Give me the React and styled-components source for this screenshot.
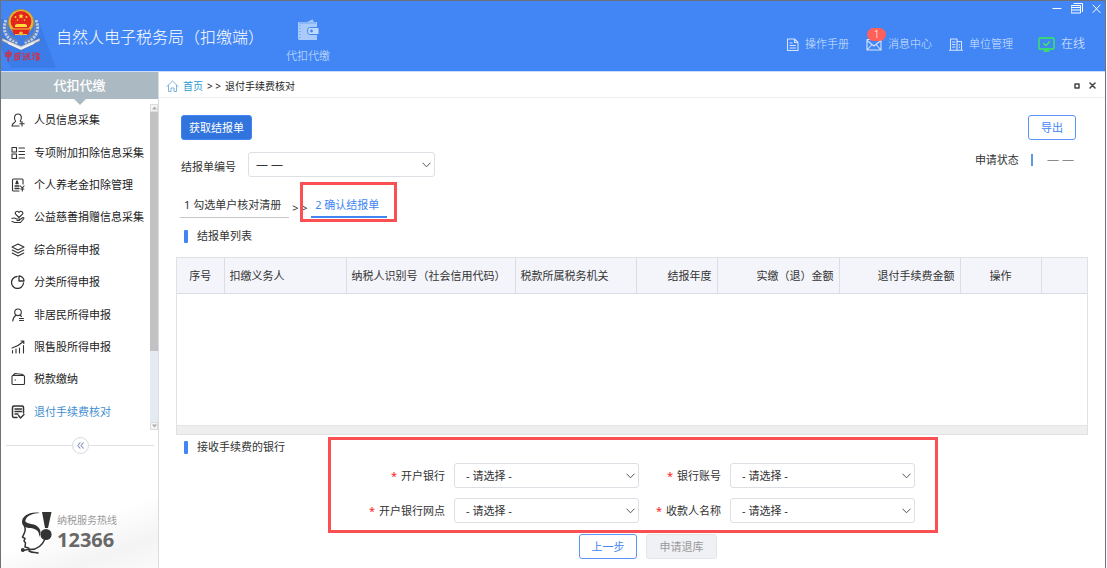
import React from "react";
import styled, { createGlobalStyle, css } from "styled-components";

const Global = createGlobalStyle`
  *, *::before, *::after { box-sizing: border-box; }
  body {
    margin: 0;
    background: #fff;
    color: #333;
    font: 11px/16px "Noto Sans", "Noto Sans CJK SC", sans-serif;
  }
  button, select { font: inherit; }
  h2, h3, p, ul { margin: 0; padding: 0; font-weight: 400; font-size: inherit; }
  a { color: inherit; text-decoration: none; }
`;

const Frame = styled.div`
  display: flex;
  flex-direction: column;
  min-height: 100vh;
  margin-right: 1px;
  border: 1px solid #6d7178;
  border-bottom: 0;
`;

/* ---------- top bar ---------- */

const TopBar = styled.header`
  position: relative;
  display: flex;
  align-items: flex-start;
  height: 71px;
  background: #4286f5;
  border-bottom: 1px solid #c9dcfb;
`;

const Logo = styled.svg`
  flex: none;
  width: 55px;
  height: 70px;
`;

const AppTitle = styled.h1`
  margin: 24px 0 0;
  color: #fff;
  font-size: 16px;
  line-height: 24px;
  font-weight: 300;
`;

const ModuleTab = styled.a`
  display: flex;
  flex-direction: column;
  align-items: center;
  gap: 7px;
  margin: 18px 0 0 22px;
  color: #d5e4fd;
  font-weight: 300;
`;

const TopLinks = styled.nav`
  display: flex;
  gap: 17px;
  margin: 35px 20px 0 auto;
`;

const TopLink = styled.a`
  position: relative;
  display: flex;
  align-items: center;
  gap: 6px;
  color: #d5e4fd;
  font-weight: 300;
  ${(p) =>
    p.$status &&
    css`
      margin-left: 8px;
      color: #e9f1ff;
      font-size: 12px;
    `}
`;

const Badge = styled.span`
  position: absolute;
  left: 1px;
  top: -8px;
  width: 19px;
  height: 13px;
  border-radius: 7px;
  background: #ff6059;
  color: #fff;
  font-size: 10px;
  line-height: 13px;
  text-align: center;
`;

const WindowControls = styled.div`
  position: absolute;
  top: 2px;
  right: 4px;
  display: flex;
  gap: 9px;
`;

const IconButton = styled.button`
  display: flex;
  padding: 0;
  border: 0;
  background: none;
  color: ${(p) => p.$color || "#fff"};
  cursor: pointer;
`;

/* ---------- side bar ---------- */

const Body = styled.div`
  display: flex;
  flex: 1;
`;

const SideBar = styled.aside`
  display: flex;
  flex-direction: column;
  flex: none;
  width: 158px;
  border-right: 1px solid #d9dce0;
`;

const SideTitle = styled.h2`
  position: relative;
  height: 27px;
  background: #abb9c2;
  color: #fff;
  font-size: 13px;
  line-height: 27px;
  font-weight: 500;
  text-align: center;
  &::after {
    content: "";
    position: absolute;
    top: 27px;
    left: 50%;
    margin-left: -6px;
    border: 6px solid transparent;
    border-top-color: #abb9c2;
    border-bottom: 0;
  }
`;

const MenuArea = styled.div`
  display: flex;
  height: 326px;
  margin-top: 5px;
`;

const Menu = styled.ul`
  display: flex;
  flex-direction: column;
  flex: 1;
  padding-bottom: 2px;
  list-style: none;
`;

const MenuItem = styled.li`
  display: flex;
  flex: 1;
`;

const MenuLink = styled.a`
  display: flex;
  align-items: center;
  gap: 8px;
  padding-left: 10px;
  white-space: nowrap;
  color: ${(p) => (p.$active ? "#3f8fd0" : "#1c1c1c")};
  svg { flex: none; color: #333; }
`;

const Scroller = styled.div`
  display: flex;
  flex-direction: column;
  flex: none;
  width: 8px;
  background: #e4ebf2;
`;

const ScrollArrow = styled.span`
  display: flex;
  align-items: center;
  justify-content: center;
  height: 8px;
  background: #f4f4f4;
  border: 1px solid #dcdcdc;
`;

const ScrollThumb = styled.span`
  height: 239px;
  margin-bottom: auto;
  background: #c2c2c2;
`;

const Divider = styled.div`
  display: flex;
  align-items: center;
  margin: 7px 4px 0 5px;
  &::before, &::after {
    content: "";
    flex: 1;
    height: 1px;
    background: #dfe1e4;
  }
`;

const Collapse = styled.button`
  display: flex;
  align-items: center;
  justify-content: center;
  width: 17px;
  height: 17px;
  padding: 0;
  border: 1px solid #d5d8e0;
  border-radius: 50%;
  background: #fff;
  color: #8c99bd;
`;

const Hotline = styled.div`
  display: flex;
  align-items: center;
  gap: 4px;
  margin-top: auto;
  padding: 20px 0 14px 19px;
  background: linear-gradient(160deg, #fff 45%, #f4f4f5 75%, #fafafa 100%);
`;

const HotlineLabel = styled.p`
  color: #9a9a9a;
  font-size: 10px;
  line-height: 14px;
`;

const HotlineNumber = styled.p`
  color: #686868;
  font: 700 20px/26px "Noto Sans", sans-serif;
`;

/* ---------- main area ---------- */

const Main = styled.main`
  flex: 1;
  min-width: 0;
`;

const CrumbBar = styled.div`
  display: flex;
  align-items: center;
  gap: 4px;
  height: 26px;
  padding: 2px 9px 0 7px;
  border-bottom: 1px solid #eceef0;
  color: #222;
  font-size: 10px;
`;

const CrumbLink = styled.a`
  display: flex;
  align-items: center;
  gap: 4px;
  color: #2e9ad0;
`;

const PaneControls = styled.div`
  display: flex;
  align-items: center;
  gap: 9px;
  margin-left: auto;
`;

const Content = styled.div`
  padding: 17px 17px 10px;
`;

const Row = styled.div`
  display: flex;
  justify-content: space-between;
  align-items: flex-start;
  padding: 0 12px 0 5px;
  & + & { margin-top: 12px; }
`;

const Button = styled.button`
  height: 25px;
  padding: 0;
  width: ${(p) => (p.$wide ? 71 : 58)}px;
  border: 1px solid #5b95f6;
  border-radius: 3px;
  background: #fff;
  color: #4286f5;
  ${(p) =>
    p.$primary &&
    css`
      border-color: #4286f5;
      background: #3274dd;
      color: #fff;
    `}
  ${(p) => p.$compact && css`width: 48px;`}
  &:disabled {
    border-color: #e3e5ea;
    background: #f0f1f5;
    color: #9a9a9a;
  }
`;

const Field = styled.div`
  display: flex;
  gap: 12px;
`;

const FieldLabel = styled.label`
  padding-top: 7px;
`;

const SelectBox = styled.div`
  position: relative;
  width: ${(p) => p.$width}px;
  svg {
    position: absolute;
    right: 4px;
    top: 10px;
    pointer-events: none;
  }
`;

const NativeSelect = styled.select`
  display: block;
  appearance: none;
  width: 100%;
  height: 25px;
  padding: 0 18px 0 ${(p) => (p.$tight ? 7 : 11)}px;
  border: 1px solid #dcdfe4;
  border-radius: 3px;
  background: #fff;
  color: #333;
  ${(p) => p.$tight && css`font-size: 12px;`}
`;

const Status = styled.div`
  display: flex;
  align-items: center;
  gap: 12px;
  color: #333;
`;

const StatusBar = styled.span`
  width: 2px;
  height: 12px;
  background: #5a9ade;
`;

const StatusValue = styled.span`
  padding: 0 2px;
  color: #8a8a8a;
  font-size: 12px;
`;

const Steps = styled.div`
  display: flex;
  align-items: flex-start;
  margin: 17px 0 0 4px;
`;

const Step = styled.a`
  position: relative;
  height: 24px;
  padding: 2px 8px 0 4px;
  line-height: 18px;
  border-bottom: ${(p) => (p.$active ? "2px solid #4286f5" : "1px solid #c4c6ca")};
  color: ${(p) => (p.$active ? "#4286f5" : "#333")};
`;

const StepArrow = styled.span`
  width: 22px;
  padding: 6px 0 0 3px;
  white-space: nowrap;
`;

const Highlight = styled.span`
  position: absolute;
  inset: ${(p) => p.$inset};
  border: 3px solid #fb5053;
  pointer-events: none;
`;

const SectionTitle = styled.h3`
  display: flex;
  align-items: center;
  gap: 9px;
  height: 14px;
  margin: ${(p) => p.$top}px 0 0 8px;
  &::before {
    content: "";
    width: 4px;
    height: 13px;
    border-radius: 1px;
    background: #4286f5;
  }
`;

const TableBox = styled.div`
  display: flex;
  flex-direction: column;
  height: 178px;
  margin-top: 14px;
  border: 1px solid #dfe1e5;
`;

const Table = styled.table`
  width: 100%;
  table-layout: fixed;
  border-collapse: collapse;
`;

const HeadCell = styled.th`
  width: ${(p) => (p.$width ? p.$width + "px" : "auto")};
  height: 35px;
  padding: 2px 5px 0 5px;
  border: solid #dcdee3;
  border-width: 0 1px 1px 0;
  background: #f4f5fa;
  color: #333;
  font-weight: 400;
  text-align: ${(p) => p.$align || "left"};
  white-space: nowrap;
  &:last-child { border-right: 0; }
`;

const ScrollStrip = styled.div`
  height: 9px;
  margin-top: auto;
  border-top: 1px solid #e4e4e4;
  background: #eee;
`;

const BankForm = styled.form`
  position: relative;
  display: grid;
  grid-template-columns: 96px 185px 73px 185px;
  gap: 10px 9px;
  width: max-content;
  margin: 9px auto 0;
`;

const FormLabel = styled.label`
  padding-top: 5px;
  text-align: right;
  white-space: nowrap;
  &::before {
    content: "*";
    margin-right: 4px;
    color: #f22;
  }
`;

const Actions = styled.div`
  display: flex;
  justify-content: center;
  gap: 9px;
  margin-top: 11px;
  padding-left: 32px;
`;

/* ---------- drawings ---------- */

const Icon = ({ w = 14, h = w, box, children, sw = 1.1 }) => (
  <svg
    width={w}
    height={h}
    viewBox={box || `0 0 ${w} ${h}`}
    fill="none"
    stroke="currentColor"
    strokeWidth={sw}
    strokeLinecap="round"
    strokeLinejoin="round"
    aria-hidden="true"
  >
    {children}
  </svg>
);

const Emblem = () => (
  <Logo viewBox="0 0 55 70" aria-hidden="true">
    <path d="M0 18 H37 L55 67 H10 L0 48Z" fill="#3b7ce8" />
    <g fill="none" stroke="#c5cbd6" strokeWidth="3" strokeDasharray="2.4 1">
      <path d="M5 19 C1 28 4 38 17 43" />
      <path d="M35 19 C39 28 36 38 23 43" />
    </g>
    <g fill="none" stroke="#78849a" strokeWidth="1.2">
      <path d="M7 21 C4 29 8 37 17 40" />
      <path d="M33 21 C36 29 32 37 23 40" />
    </g>
    <path d="M1 37 L20 45 L39 37 L39 40 L20 49 L1 40Z" fill="#d8dde5" stroke="#66738c" strokeWidth=".7" />
    <path d="M7 42 L20 48 L33 42" fill="none" stroke="#f3f5f8" strokeWidth="1.4" />
    <circle cx="20" cy="21" r="12.6" fill="#e5b73a" stroke="#b98a1e" strokeWidth=".6" />
    <circle cx="20" cy="20.5" r="10.4" fill="#e3261c" />
    <path d="M20 12.5 l.8 1.700 1.800 .2 -1.300 1.200 .4 1.800 -1.700 -.9 -1.700 .9 .4 -1.800 -1.300 -1.200 1.800 -.2z" fill="#ffdc3c" />
    <g fill="#ffdc3c">
      <circle cx="14.5" cy="16" r=".9" />
      <circle cx="25.5" cy="16" r=".9" />
      <circle cx="16.5" cy="19" r=".8" />
      <circle cx="23.5" cy="19" r=".8" />
      <path d="M14 26 v-2 l2-1 h8 l2 1 v2z" />
    </g>
    <path d="M11 28 h18 l-2 6 h-14z" fill="#e3261c" />
    <path d="M12 28 h16 M14 33.5 h4 M22 33.5 h4" stroke="#f1c340" strokeWidth="1.2" />
    <circle cx="20" cy="32.5" r="2" fill="#efc03a" />
    <g fill="none" stroke="#d92c3c" strokeWidth="1.1" strokeLinecap="round">
      <path d="M5 52 h5 l-.6 3 h-4.600z M7.500 49.500 L7.200 60" strokeWidth="1.400" />
      <path d="M14 53 l5-1 -.6 6 -4.600 1z M15 55 h3 M16.500 54 v4" />
      <path d="M22 52 l1 1 M22 55 l1.500 0 -1 4 M25.500 52.500 l1 1.500 M28.500 52 l-1 2 M25 55 h3 M26 56 l-1.500 3 M27.500 56 l.5 2.500 1.500 0" />
      <path d="M32 52 l1 1 M31.500 54.500 h1.500 l-1 4 M36 51.500 l-1.500 2 M35 53 l3.500 0 -3 3 M36 55.500 l2.500 1 M35 57.500 h3 l-1 2 M37 57 l-2 2.500" />
    </g>
  </Logo>
);

const WalletIcon = () => (
  <svg width="22" height="22" viewBox="0 0 22 22" aria-hidden="true">
    <path d="M1 3 H10 L15.500 .5 L17 3 H20 V21 H2.500 Q1 21 1 19.500Z" fill="#a9cbfa" />
    <path d="M2 4 H19" stroke="#6da3f7" strokeWidth="1" />
    <path d="M3 6 V19" stroke="#5a96f4" strokeWidth="1" strokeDasharray="1 2" />
    <path d="M12.500 8.500 H22 V15.500 H12.500 Q10.500 15 10.500 12 Q10.500 9 12.500 8.500Z" fill="#bfd9fd" stroke="#4286f5" strokeWidth="1" />
    <circle cx="14.500" cy="12" r="1.400" fill="#4286f5" />
  </svg>
);

const HotlineFace = () => (
  <svg width="33" height="44" viewBox="0 0 33 44" aria-hidden="true">
    <path d="M20 2 C10 0 2 5 2 11 C2 15 6 17 11 17 C17 18 20 21 19 26 C23 20 19 14 11 13 C7 12 4 11 6 8 C8 4 13 2.500 20 2Z" fill="#333" />
    <path d="M22 1 H31.500 L28 17 H25Z" fill="#333" />
    <circle cx="26" cy="23.500" r="5.600" fill="#333" />
    <g fill="none" stroke="#333" strokeWidth="1.500" strokeLinecap="round">
      <path d="M4.500 15 C6 19 5 21 2.500 26 L5 27.500 L4 30 L5.500 32 L5 36 L8.500 37" />
      <path d="M25 28 C22 35 17 39 9 38.500 M3 39.500 L10 38 M9 40 C13 42.500 15 41 18 42" />
    </g>
    <circle cx="2.800" cy="39" r="1.900" fill="#333" />
  </svg>
);

const menuItems = [
  {
    label: "人员信息采集",
    icon: (
      <>
        <path d="M4.500 8 C2.800 6 3 1 7 1 C11 1 11 6 9.200 8 M4.500 8 C5 9.500 1 9.500 1 13 H8 M9.200 8 L10 9" />
        <path d="M11 8.500 V13 M8.800 10.800 H13.200" />
      </>
    ),
  },
  {
    label: "专项附加扣除信息采集",
    icon: (
      <>
        <rect x="1" y="1.500" width="4.500" height="4.500" />
        <rect x="1" y="8" width="4.500" height="4.500" />
        <path d="M8 2 H13.500 M8 5.500 H13.500 M8 8.500 H13.500 M8 12 H13.500" />
      </>
    ),
  },
  {
    label: "个人养老金扣除管理",
    icon: (
      <>
        <path d="M8 13 H2.500 Q1.500 13 1.500 12 V2 Q1.500 1 2.500 1 H11 Q12 1 12 2 V6" />
        <path d="M5 5.500 L6 3 L7 5.500 Z M4 8 H8 M4 10.500 H8" strokeWidth="1.400" />
        <path d="M9.500 8 L11.300 10 L13 8 M11.300 10 V13 M9.800 11 H12.800" />
      </>
    ),
  },
  {
    label: "公益慈善捐赠信息采集",
    icon: (
      <>
        <path d="M8 7.500 L4.600 4.200 C3.500 2.500 5.800 -.2 8 2.400 C10.200 -.2 12.800 2.500 11.500 4.200 Z" />
        <path d="M1 8.500 C3 7.500 4 8 5.500 9 H8.500 Q9 10.500 7.500 10.500 H6 M9 9.500 L12 7.500 Q13.500 7.500 12.500 9 L9.500 12.500 H4 L1 11.500" />
      </>
    ),
  },
  {
    label: "综合所得申报",
    icon: (
      <path d="M7 1 L13 4 L7 7 L1 4Z M1.200 7 L7 10 L12.800 7 M1.200 10 L7 13 L12.800 10" />
    ),
  },
  {
    label: "分类所得申报",
    icon: (
      <path d="M6 1.500 A6 6 0 1 0 12.500 8 M8 1 V6 H13 A5.200 5.200 0 0 0 8 1Z" strokeWidth="1.300" />
    ),
  },
  {
    label: "非居民所得申报",
    icon: (
      <>
        <circle cx="7" cy="4.300" r="3.300" />
        <path d="M5 7.200 C3 8.500 2 10 1.800 13 M9 7.300 L10.500 8.500 M8.500 10.500 H12.500 M8.500 12.500 H12.500" />
      </>
    ),
  },
  {
    label: "限售股所得申报",
    icon: (
      <path d="M1.500 10.500 V13 M5 9 V13 M8.500 8 V13 M12.500 5.500 V13 M1 8 C5 7 8 5.500 12.500 1.500 M10 1 H12.800 V3.500" />
    ),
  },
  {
    label: "税款缴纳",
    icon: (
      <>
        <rect x="1" y="3.500" width="12.500" height="9" rx="1" />
        <path d="M2 3.500 L4 1.500 L12 2.500 V3.500 M4 8 H4.500" />
      </>
    ),
  },
  {
    label: "退付手续费核对",
    active: true,
    icon: (
      <>
        <path d="M6 12.500 H3 Q1.500 12.500 1.500 11 V2.500 Q1.500 1 3 1 H11 Q12.500 1 12.500 2.500 V8" strokeWidth="1.500" />
        <path d="M4 4 H10.500 M4 6.500 H10.500 M4 9 H7 M7.500 10.500 L9.500 13 L13 9.500" strokeWidth="1.400" />
      </>
    ),
  },
];

const columns = [
  { label: "序号", width: 47, align: "center" },
  { label: "扣缴义务人", width: 122 },
  { label: "纳税人识别号（社会信用代码）", width: 169 },
  { label: "税款所属税务机关", width: 121 },
  { label: "结报年度", width: 81, align: "right" },
  { label: "实缴（退）金额", width: 122, align: "right" },
  { label: "退付手续费金额", width: 121, align: "right" },
  { label: "操作", width: 81, align: "center" },
  { label: "" },
];

const bankFields = [
  ["bank", "开户银行"],
  ["account", "银行账号"],
  ["branch", "开户银行网点"],
  ["payee", "收款人名称"],
];

const Select = ({ id, width, text, tight }) => (
  <SelectBox $width={width}>
    <NativeSelect id={id} $tight={tight}>
      <option>{text}</option>
    </NativeSelect>
    <Icon w={9} h={6} sw={1}>
      <path d="M.8 1 L4.500 4.800 L8.200 1" stroke="#555" />
    </Icon>
  </SelectBox>
);

export default function App() {
  return (
    <>
      <Global />
      <Frame>
        <TopBar>
          <Emblem />
          <AppTitle>自然人电子税务局（扣缴端）</AppTitle>
          <ModuleTab href="#withhold">
            <WalletIcon />
            代扣代缴
          </ModuleTab>
          <TopLinks>
            <TopLink href="#manual">
              <Icon w={13}>
                <path d="M1.500 1 H8.500 L12 4.500 V12.500 H1.500Z M8.500 1 V4.500 H12 M4 5 H6 M4 7.500 H9.500 M4 10 H9.500" />
              </Icon>
              操作手册
            </TopLink>
            <TopLink href="#messages">
              <Icon w={16} h={13}>
                <path d="M1 1.500 H15 V12 H1Z M1 2.500 L8 8 L15 2.500 M1.500 11.500 L5.500 7 M14.500 11.500 L10.500 7" />
              </Icon>
              消息中心
              <Badge>1</Badge>
            </TopLink>
            <TopLink href="#units">
              <Icon w={14} h={13}>
                <path d="M1.500 12 V1 H8 V12 M8 3.500 H12.500 V12 M.5 12.300 H13.500 M3.500 4 H6 M3.500 6.500 H6 M3.500 9 H6 M10.300 6.500 V7 M10.300 9 V9.500" />
              </Icon>
              单位管理
            </TopLink>
            <TopLink href="#online" $status>
              <Icon w={17} h={15} sw={1.3}>
                <g stroke="#38f050">
                  <rect x="1" y="1" width="15" height="11" rx="1" />
                  <path d="M5.500 6.500 L8 8.500 L11.500 4.800 M6 14 H11 M8.500 12 V14" />
                </g>
              </Icon>
              在线
            </TopLink>
          </TopLinks>
          <WindowControls>
            <IconButton aria-label="最小化">
              <Icon w={10} h={11}><path d="M1 5.500 H9" /></Icon>
            </IconButton>
            <IconButton aria-label="还原">
              <Icon w={12} h={11} sw={1}>
                <path d="M.5 2.500 H9.500 V10 H.5Z M.5 4.500 H9.500 M.5 7 H9.500 M3 .5 H11.500 V8.500" />
              </Icon>
            </IconButton>
            <IconButton aria-label="关闭">
              <Icon w={9} h={11} sw={1}><path d="M1 2 L8 9.500 M8 2 L1 9.500" /></Icon>
            </IconButton>
          </WindowControls>
        </TopBar>

        <Body>
          <SideBar>
            <SideTitle>代扣代缴</SideTitle>
            <MenuArea>
              <Menu>
                {menuItems.map((m) => (
                  <MenuItem key={m.label}>
                    <MenuLink href="#menu" $active={m.active}>
                      <Icon w={15} h={14}>{m.icon}</Icon>
                      {m.label}
                    </MenuLink>
                  </MenuItem>
                ))}
              </Menu>
              <Scroller>
                <ScrollArrow>
                  <Icon w={5} h={4}><path d="M0 3.500 L2.500 .5 L5 3.500Z" fill="#aaa" stroke="none" /></Icon>
                </ScrollArrow>
                <ScrollThumb />
                <ScrollArrow>
                  <Icon w={5} h={4}><path d="M0 .5 L2.500 3.500 L5 .5Z" fill="#aaa" stroke="none" /></Icon>
                </ScrollArrow>
              </Scroller>
            </MenuArea>
            <Divider>
              <Collapse aria-label="收起">
                <Icon w={7} h={7}><path d="M3 .8 L.8 3.500 L3 6.200 M6.200 .8 L4 3.500 L6.200 6.200" /></Icon>
              </Collapse>
            </Divider>
            <Hotline>
              <HotlineFace />
              <div>
                <HotlineLabel>纳税服务热线</HotlineLabel>
                <HotlineNumber>12366</HotlineNumber>
              </div>
            </Hotline>
          </SideBar>

          <Main>
            <CrumbBar>
              <CrumbLink href="#home">
                <Icon w={13} h={12} sw={1}>
                  <path d="M.8 6.500 L6.500 1 L12.200 6.500 M2.500 5.500 V11.500 H5 V8 H8 V11.500 H10.500 V5.500" stroke="#7fb4dc" />
                </Icon>
                首页
              </CrumbLink>
              <span>&gt; &gt;</span>
              <span>退付手续费核对</span>
              <PaneControls>
                <IconButton aria-label="最大化" $color="#444">
                  <Icon w={6} h={6} sw={1.500}><path d="M1 1 H5 V5 H1Z" /></Icon>
                </IconButton>
                <IconButton aria-label="关闭页签" $color="#444">
                  <Icon w={7} h={7} sw={1.500}><path d="M1 1 L6 6 M6 1 L1 6" /></Icon>
                </IconButton>
              </PaneControls>
            </CrumbBar>

            <Content>
              <Row>
                <Button type="button" $primary $wide>获取结报单</Button>
                <Button type="button" $compact>导出</Button>
              </Row>
              <Row>
                <Field>
                  <FieldLabel htmlFor="report-no">结报单编号</FieldLabel>
                  <Select id="report-no" width={187} text="— —" tight />
                </Field>
                <Status>
                  申请状态
                  <StatusBar />
                  <StatusValue>— —</StatusValue>
                </Status>
              </Row>

              <Steps>
                <Step href="#step1">1 勾选单户核对清册</Step>
                <StepArrow>&gt; &gt;</StepArrow>
                <Step href="#step2" $active>
                  2 确认结报单
                  <Highlight $inset="-12px -10px -6px -11px" />
                </Step>
              </Steps>

              <SectionTitle $top={11}>结报单列表</SectionTitle>
              <TableBox>
                <Table>
                  <thead>
                    <tr>
                      {columns.map((c) => (
                        <HeadCell key={c.label} $width={c.width} $align={c.align}>
                          {c.label}
                        </HeadCell>
                      ))}
                    </tr>
                  </thead>
                </Table>
                <ScrollStrip />
              </TableBox>

              <SectionTitle $top={5}>接收手续费的银行</SectionTitle>
              <BankForm>
                {bankFields.map(([id, label]) => (
                  <React.Fragment key={id}>
                    <FormLabel htmlFor={id}>{label}</FormLabel>
                    <Select id={id} width={185} text="- 请选择 -" />
                  </React.Fragment>
                ))}
                <Highlight $inset="-26px -23px -10px -21px" />
              </BankForm>
              <Actions>
                <Button type="button">上一步</Button>
                <Button type="button" $wide disabled>申请退库</Button>
              </Actions>
            </Content>
          </Main>
        </Body>
      </Frame>
    </>
  );
}
